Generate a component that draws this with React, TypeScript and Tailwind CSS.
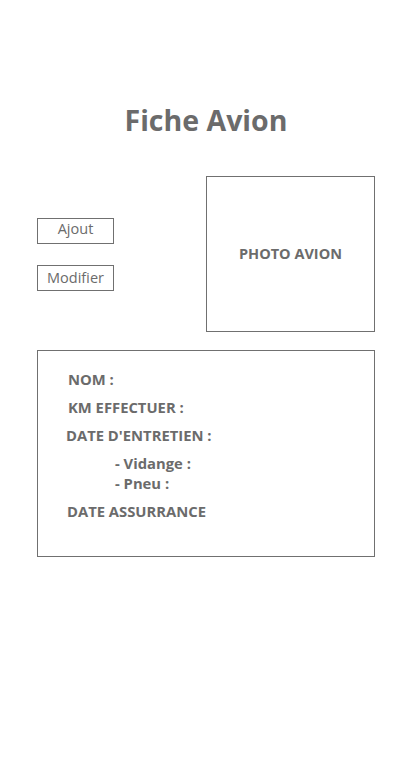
export default function App() {
  return (
    <div
      className="min-h-[778px] w-[412px] bg-white text-[#6b6b6b]"
      style={{ fontFamily: '"Open Sans", "Noto Sans", sans-serif' }}
    >
      <h1 className="pt-[100px] text-center text-[28.5px] font-bold leading-[40px]">Fiche Avion</h1>

      <div className="mt-[36px] ml-[37px] flex w-[338px] items-center justify-between">
        <div className="flex flex-col gap-[21px]">
          <button className="h-[26px] w-[77px] border border-[#707070] pb-[3px] text-[14.5px] leading-[20px]">
            Ajout
          </button>
          <button className="h-[26px] w-[77px] border border-[#707070] text-[14.5px] leading-[20px]">
            Modifier
          </button>
        </div>
        <div className="flex h-[156px] w-[169px] items-center justify-center border border-[#707070]">
          <span className="text-[14.5px] font-bold">PHOTO AVION</span>
        </div>
      </div>

      <div className="mt-[18px] ml-[37px] h-[207px] w-[338px] border border-[#707070] pt-[18px] text-[14.8px] font-bold leading-[20px]">
        <p className="ml-[30px]">NOM :</p>
        <p className="ml-[30px] mt-[8px]">KM EFFECTUER :</p>
        <p className="ml-[28px] mt-[8px]">DATE D'ENTRETIEN :</p>
        <p className="ml-[77px] mt-[8px]">- Vidange :</p>
        <p className="ml-[77px]">- Pneu :</p>
        <p className="ml-[29px] mt-[8px]">DATE ASSURRANCE</p>
      </div>
    </div>
  );
}
